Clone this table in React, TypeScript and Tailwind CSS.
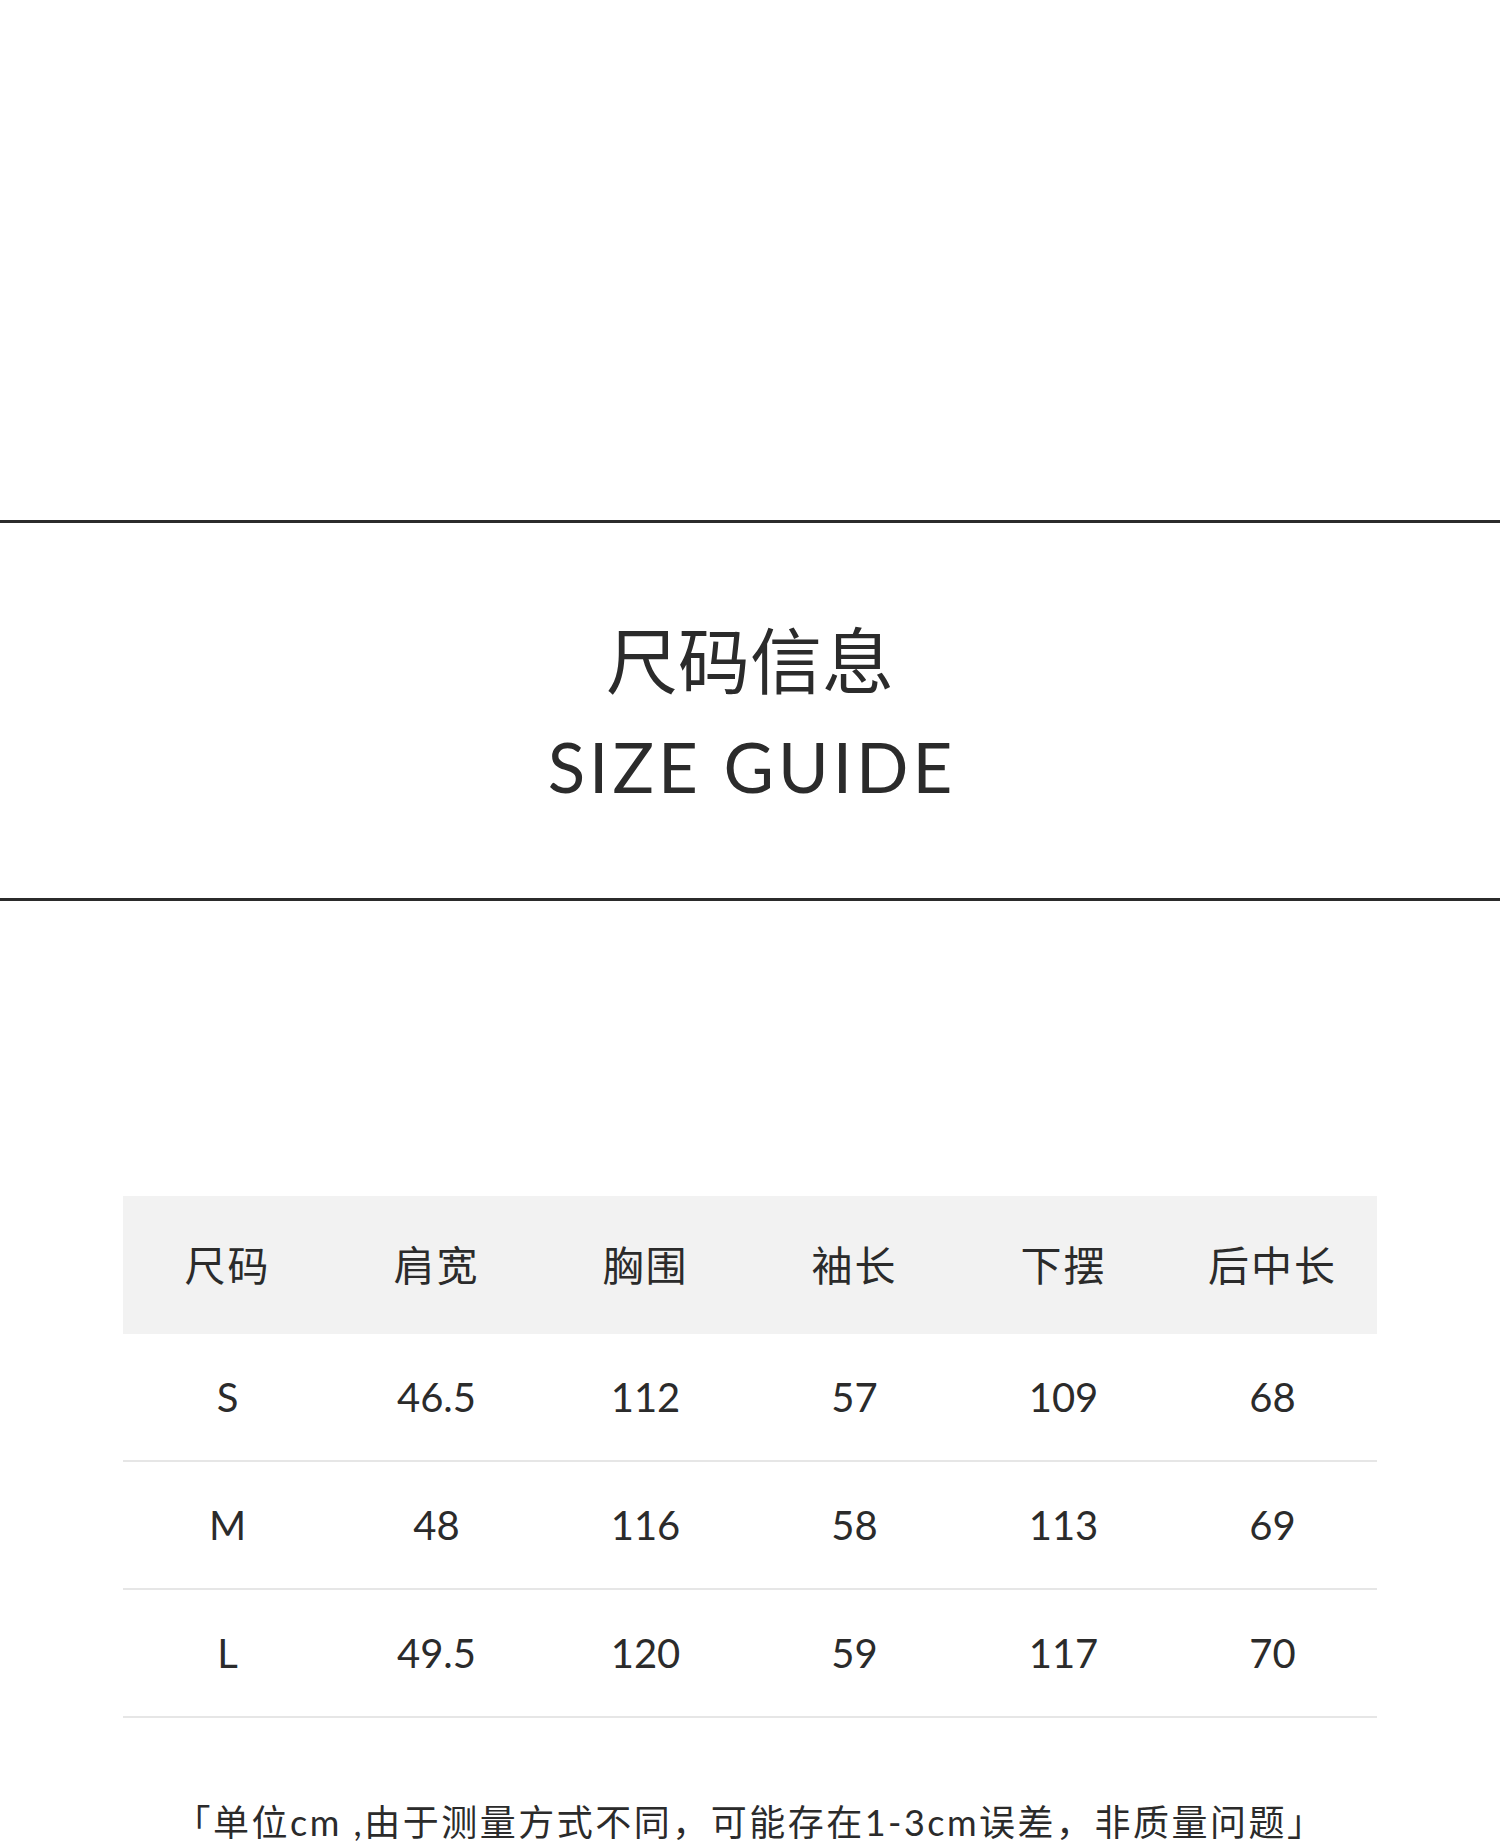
const sizeRows = [
  ["S", "46.5", "112", "57", "109", "68"],
  ["M", "48", "116", "58", "113", "69"],
  ["L", "49.5", "120", "59", "117", "70"]
];

const columns = ["尺码", "肩宽", "胸围", "袖长", "下摆", "后中长"];

const cjk = "font-['Lato','Noto_Sans_CJK_SC',sans-serif]";

export default function App() {
  return (
    <div className={`h-[1843px] overflow-hidden bg-white text-[#2b2b2b] ${cjk}`}>
      <div className="h-[520px]" />

      <section className="flex flex-col items-center border-y-[3px] border-[#2b2b2b] pt-[101px] pb-[97px]">
        <h2 className="text-[72px] font-normal leading-none">尺码信息</h2>
        <p className="mt-[36px] pl-[4px] text-[69px] leading-none tracking-[4px]">SIZE GUIDE</p>
      </section>

      <div className="mt-[295px] px-[123px]">
        <div className="grid h-[138px] grid-cols-6 items-center bg-[#f2f2f2]">
          {columns.map((name) => (
            <div key={name} className="text-center text-[41px] leading-none tracking-[2px]">
              {name}
            </div>
          ))}
        </div>
        {sizeRows.map((row) => (
          <div key={row[0]} className="grid h-[128px] grid-cols-6 items-center border-b-2 border-[#e6e6e6]">
            {row.map((value, index) => (
              <div key={index} className="text-center text-[40px] leading-none">
                {value}
              </div>
            ))}
          </div>
        ))}
      </div>

      <p className="mt-[86px] text-center text-[36px] leading-none tracking-[2.5px]">
        「单位cm ,由于测量方式不同，可能存在1-3cm误差，非质量问题」
      </p>
    </div>
  );
}
